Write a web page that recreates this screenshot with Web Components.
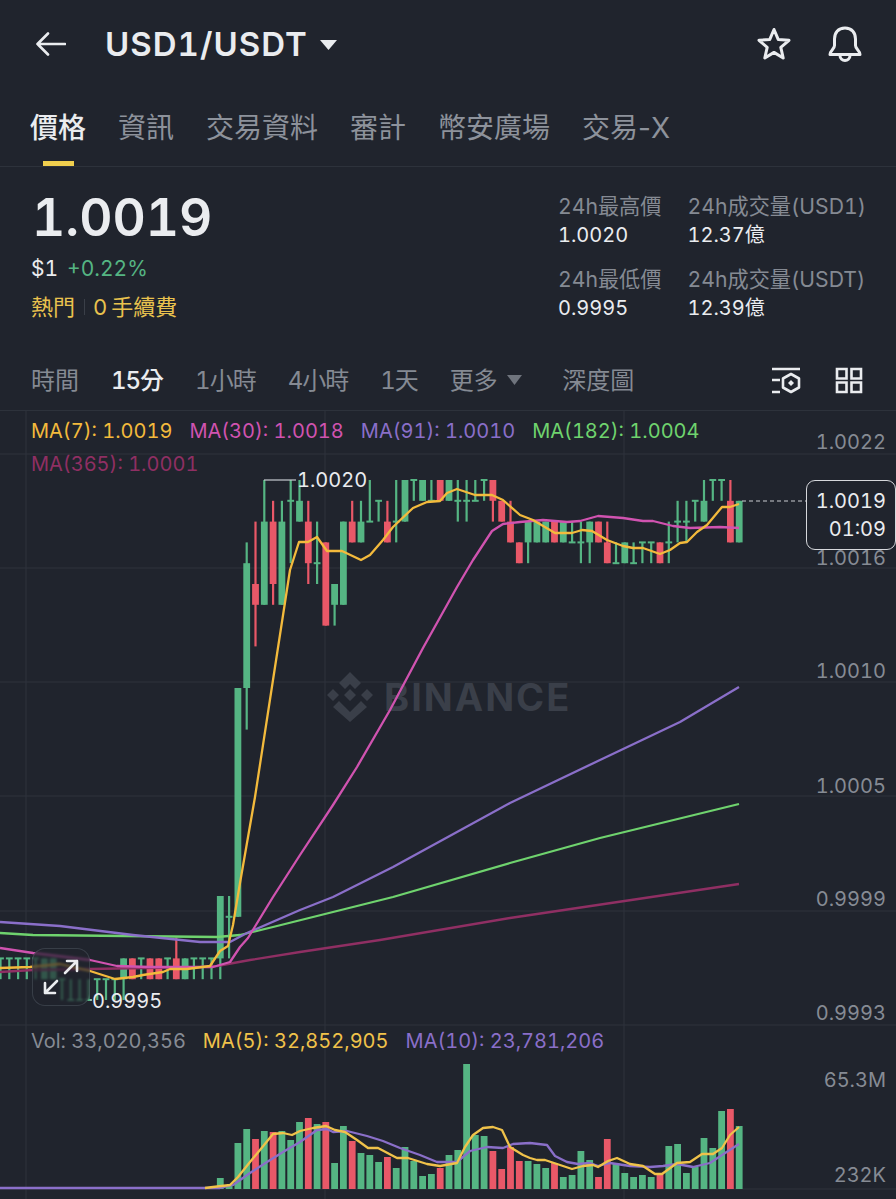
<!DOCTYPE html>
<html lang="zh-Hant">
<head>
<meta charset="utf-8">
<title>USD1/USDT</title>
<style>
    html, body { margin: 0; background: #20242d; }
    body {
        width: 896px;
        height: 1199px;
        overflow: hidden;
        display: flex;
        flex-direction: column;
        color: #eaecef;
        font-family: Inter, "Noto Sans CJK TC", sans-serif;
        font-variant-numeric: tabular-nums;
    }
</style>
</head>
<body>
<pair-header>USD1/USDT</pair-header>
<tab-bar></tab-bar>
<price-panel></price-panel>
<interval-bar></interval-bar>
<kline-chart></kline-chart>

<script>
class PairHeader extends HTMLElement {
    constructor() {
        super();
        this.attachShadow({ mode: 'open' });
    }

    connectedCallback() {
        this.shadowRoot.innerHTML = `
            <style>
                :host { display: flex; align-items: center; height: 88px; padding: 0 34px 0 36px; box-sizing: border-box; }
                .back { width: 30px; height: 24px; margin-right: 39px; }
                .name { font-size: 33px; font-weight: 600; letter-spacing: 1px; color: #eaecef; }
                .caret { width: 17px; height: 10px; margin-left: 12px; margin-top: 1px; }
                .spacer { flex: 1; }
                .star { width: 34px; height: 34px; margin-right: 37px; }
                .bell { width: 34px; height: 36px; }
                svg { display: block; fill: none; stroke: #eaecef; }
            </style>
            <svg class="back" viewBox="0 0 30 24" stroke-width="2.6" stroke-linecap="round" stroke-linejoin="round">
                <path d="M1.5 12H29M12 1.5 1.5 12 12 22.5"/>
            </svg>
            <span class="name"><slot></slot></span>
            <svg class="caret" viewBox="0 0 17 10" style="fill:#eaecef;stroke:none"><path d="M0 0H17L8.5 10Z"/></svg>
            <span class="spacer"></span>
            <svg class="star" viewBox="0 0 34 34" stroke-width="3" stroke-linejoin="round">
                <path d="M17 2.5 21.2 12.4 32 13.3 23.8 20.3 26.2 31 17 25.4 7.8 31 10.2 20.3 2 13.3 12.8 12.4Z"/>
            </svg>
            <svg class="bell" viewBox="0 0 34 36" stroke-width="3" stroke-linejoin="round" stroke-linecap="round">
                <path d="M17 2C10 2 6.5 7 6.5 13V19.5C6.5 23 2 24.5 2 28.5H32C32 24.5 27.5 23 27.5 19.5V13C27.5 7 24 2 17 2Z"/>
                <path d="M12 29.5C12 36 22 36 22 29.5"/>
            </svg>
        `;
    }
}

class TabBar extends HTMLElement {
    constructor() {
        super();
        this.attachShadow({ mode: 'open' });
    }

    connectedCallback() {
        const tabs = ['價格', '資訊', '交易資料', '審計', '幣安廣場', '交易-X'];
        this.shadowRoot.innerHTML = `
            <style>
                :host { display: flex; gap: 32px; height: 79px; padding-left: 30px; box-sizing: border-box; border-bottom: 1px solid #2d323b; font-size: 28px; color: #8d929b; font-variant-numeric: normal; }
                .tab { position: relative; line-height: 80px; white-space: nowrap; }
                .on { color: #eaecef; font-weight: 500; }
                .on::after { content: ''; position: absolute; left: 13px; width: 31px; bottom: 0; height: 5px; background: #f0cf4e; }
            </style>
            ${tabs.map((t, i) => `<div class="tab ${i === 0 ? 'on' : ''}">${t}</div>`).join('')}
        `;
    }
}

class StatCell extends HTMLElement {
    constructor() {
        super();
        this.attachShadow({ mode: 'open' });
    }

    connectedCallback() {
        this.shadowRoot.innerHTML = `
            <style>
                :host { display: block; white-space: nowrap; }
                .label { font-size: 21.2px; line-height: 30px; color: #858a93; }
                .value { font-size: 20px; line-height: 28px; color: #eaecef; }
            </style>
            <div class="label">${this.getAttribute('label')}</div>
            <div class="value">${this.getAttribute('value')}</div>
        `;
    }
}

class PricePanel extends HTMLElement {
    constructor() {
        super();
        this.attachShadow({ mode: 'open' });
    }

    connectedCallback() {
        this.shadowRoot.innerHTML = `
            <style>
                :host { display: flex; justify-content: space-between; height: 188px; padding: 0 30px 0 31px; box-sizing: border-box; }
                .left { padding-top: 18px; }
                .price { font-size: 51.5px; line-height: 64px; font-weight: 600; color: #eaecef; margin-left: 1px; }
                .sub { font-size: 21px; line-height: 30px; margin-top: 5px; display: flex; gap: 9px; }
                .up { color: #55b583; }
                .tags { display: flex; align-items: center; font-size: 22px; line-height: 30px; margin-top: 8px; color: #e9c24e; }
                .sep { width: 1px; height: 16px; background: #3a3f48; margin: 0 8px 0 9px; }
                .num { margin-right: 4px; }
                .stats { display: grid; grid-template-columns: auto auto; column-gap: 26px; row-gap: 15px; align-content: start; padding-top: 24px; }
            </style>
            <div class="left">
                <div class="price">1.0019</div>
                <div class="sub"><span>$1</span><span class="up">+0.22%</span></div>
                <div class="tags"><span>熱門</span><span class="sep"></span><span class="num">0</span><span>手續費</span></div>
            </div>
            <div class="stats">
                <stat-cell label="24h最高價" value="1.0020"></stat-cell>
                <stat-cell label="24h成交量(USD1)" value="12.37億"></stat-cell>
                <stat-cell label="24h最低價" value="0.9995"></stat-cell>
                <stat-cell label="24h成交量(USDT)" value="12.39億"></stat-cell>
            </div>
        `;
    }
}

class IntervalBar extends HTMLElement {
    constructor() {
        super();
        this.attachShadow({ mode: 'open' });
    }

    connectedCallback() {
        const items = ['時間', '15分', '1小時', '4小時', '1天'];
        this.shadowRoot.innerHTML = `
            <style>
                :host { display: flex; align-items: center; gap: 32px; height: 55px; padding: 0 33px 8px 31px; box-sizing: border-box; font-size: 24px; color: #858a93; }
                .on { color: #eaecef; font-weight: 500; }
                .num { letter-spacing: -1px; }
                .more { display: flex; align-items: center; gap: 9px; margin-right: 8.5px; }
                .more svg { width: 15px; height: 10px; fill: #6f747d; margin-top: 2px; }
                .spacer { flex: 1; }
                .icons { display: flex; gap: 34px; margin-top: 4px; }
                .icons svg { display: block; fill: none; stroke: #eaecef; stroke-width: 2.6; }
            </style>
            ${items.map(t => `<span class="${t === '15分' ? 'on ' : ''}${/\d/.test(t) ? 'num' : ''}">${t}</span>`).join('')}
            <span class="more">更多<svg viewBox="0 0 15 10"><path d="M0 0H15L7.5 10Z"/></svg></span>
            <span>深度圖</span>
            <span class="spacer"></span>
            <span class="icons">
                <svg width="30" height="28" viewBox="0 0 30 28">
                    <path d="M1 2H29M1 13H9M1 25H9"/>
                    <path d="M20 7 28 11.5V20.5L20 25 12 20.5V11.5Z" stroke-linejoin="round"/>
                    <path d="M20 13 23 16 20 19 17 16Z" style="fill:#eaecef;stroke:none"/>
                </svg>
                <svg width="28" height="27" viewBox="0 0 28 27">
                    <path d="M2 2H11.5V11.5H2ZM16.5 2H26V11.5H16.5ZM2 15.5H11.5V25H2ZM16.5 15.5H26V25H16.5Z"/>
                </svg>
            </span>
        `;
    }
}

// candle levels: n steps of 0.0001 down from 1.0020
const lvl = n => 480 + 20.8 * n;
const cx = i => 246.7 + 8.794 * i;

// [index, up?, bodyTop, bodyBottom, wickTop, wickBottom]
// bodyTop === bodyBottom gives the flat "T" dash
const CANDLES = [
    [-28, 1, 23, 23, 23, 24], [-27, 1, 23, 23, 23, 24], [-26, 1, 23, 23, 23, 24], [-25, 1, 23, 23, 23, 24],
    [-24, 1, 23, 23, 23, 24], [-23, 1, 23, 24, 23, 24], [-22, 1, 23, 24, 23, 24], [-21, 1, 24, 24, 24, 25],
    [-20, 1, 25, 25, 24, 25], [-19, 1, 25, 25, 24, 25], [-18, 1, 25, 25, 24, 25], [-17, 1, 24, 24, 24, 25],
    [-16, 1, 24, 24, 24, 25], [-15, 1, 24, 24, 24, 25], [-14, 1, 23, 24, 23, 25], [-13, 0, 23, 24, 23, 24],
    [-12, 1, 23, 23, 23, 24], [-11, 0, 23, 24, 23, 24], [-10, 0, 23, 24, 23, 24], [-9, 1, 23, 23, 23, 24],
    [-8, 0, 23, 24, 22, 24], [-7, 1, 23, 24, 23, 24], [-6, 1, 23, 23, 23, 24], [-5, 1, 23, 23, 23, 24],
    [-4, 1, 23, 23, 23, 24], [-3, 1, 20, 23, 20, 24], [-2, 1, 21, 21, 20, 23], [-1, 1, 10, 21, 10, 21],
    [0, 1, 4, 10, 3, 12], [1, 0, 5, 6, 2, 8], [2, 1, 2, 6, 0, 6], [3, 0, 2, 5, 1, 6],
    [4, 1, 2, 6, 1, 6], [5, 1, 1, 1, 0, 4], [6, 1, 1, 2, 0, 2], [7, 0, 2, 4, 1, 5],
    [8, 1, 4, 4, 2, 5], [9, 0, 3, 7, 3, 7], [10, 1, 5, 6, 5, 7], [11, 1, 2, 6, 2, 6],
    [12, 0, 2, 3, 1, 3], [13, 1, 2, 3, 1, 3], [14, 1, 2, 2, 0, 2], [15, 1, 1, 1, 1, 2],
    [16, 0, 2, 3, 1, 3], [17, 1, 2, 2, 0, 3], [18, 1, 0, 2, 0, 2], [19, 1, 0, 0, 0, 1],
    [20, 1, 0, 1, 0, 1], [21, 1, 1, 1, 0, 1], [22, 0, 0, 1, 0, 1], [23, 1, 0, 1, 0, 1],
    [24, 1, 1, 1, 0, 2], [25, 1, 1, 1, 0, 2], [26, 1, 1, 1, 0, 1], [27, 1, 0, 0, 0, 1],
    [28, 0, 0, 1, 0, 2], [29, 0, 1, 2, 1, 2], [30, 0, 2, 3, 1, 3], [31, 0, 3, 4, 3, 4],
    [32, 1, 2, 3, 2, 4], [33, 1, 2, 3, 2, 3], [34, 1, 2, 3, 2, 3], [35, 0, 2, 3, 2, 3],
    [36, 1, 2, 3, 2, 3], [37, 1, 3, 3, 2, 3], [38, 1, 3, 3, 2, 4], [39, 1, 2, 3, 2, 4],
    [40, 0, 2, 3, 2, 3], [41, 0, 3, 4, 2, 4], [42, 1, 4, 4, 3, 4], [43, 1, 3, 4, 3, 4],
    [44, 1, 4, 4, 3, 4], [45, 1, 3, 3, 3, 4], [46, 1, 3, 3, 3, 4], [47, 0, 3, 4, 3, 4],
    [48, 1, 3, 3, 2, 4], [49, 1, 2, 2, 1, 3], [50, 1, 2, 2, 1, 3], [51, 1, 1, 1, 1, 2],
    [52, 1, 1, 2, 0, 2], [53, 1, 0, 0, 0, 1], [54, 1, 0, 0, 0, 1], [55, 0, 1, 3, 0, 3],
    [56, 1, 1, 3, 1, 3]
];

const MA_LINES = [
    { color: '#8f2f63', pts: '0,972 33,970 90,969 200,967 217,966 250,960 300,952 380,940 510,918 739,884' },
    { color: '#6fd36e', pts: '0,933 33,935 217,937 240,935 273,927 333,912 393,897 510,863 600,838 739,804' },
    { color: '#8a6fc9', pts: '0,922 60,926 133,935 200,942 230,942 247,933 300,910 333,897 393,867 457,832 510,803 600,760 680,722 739,687' },
    { color: '#d053b0', pts: '0,948 33,953 90,960 117,966 150,967 213,967 230,962 240,947 248,938 273,897 300,855 333,805 357,767 390,710 423,648 457,587 473,560 492,531 503,524 520,522 543,520 567,522 580,521 598,516 623,518 643,521 653,521 673,526 690,528 720,527 739,528' },
    { color: '#f3ba3c', pts: '0,968 30,967 60,964 90,971 115,979 133,977 143,975 163,972 170,969 187,969 210,966 220,951 228,946 233,925 240,883 255,797 273,680 290,570 299,542 308,542 317,537 327,551 342,551 361,560 370,555 383,540 393,527 413,508 427,502 440,501 447,493 457,489 475,495 492,495 503,500 520,515 533,520 555,533 572,533 582,530 592,531 607,540 623,546 633,548 643,548 660,554 670,550 680,543 687,542 697,532 707,525 722,507 730,507 739,504' }
];

// [index, up?, top y as read off the volume pane]
const VOLUME = [
    [-3, 1, 1178], [-2, 1, 1185], [-1, 1, 1143], [0, 1, 1129], [1, 0, 1139], [2, 1, 1131], [3, 0, 1132], [4, 1, 1131],
    [5, 1, 1140], [6, 1, 1122], [7, 0, 1118], [8, 1, 1124], [9, 0, 1122], [10, 1, 1163], [11, 1, 1126], [12, 0, 1141],
    [13, 1, 1153], [14, 1, 1155], [15, 1, 1162], [16, 0, 1157], [17, 1, 1168], [18, 1, 1147], [19, 1, 1161], [20, 1, 1176],
    [21, 1, 1174], [22, 0, 1168], [23, 1, 1155], [24, 1, 1150], [25, 1, 1064], [26, 1, 1135], [27, 1, 1136], [28, 0, 1151],
    [29, 0, 1169], [30, 0, 1147], [31, 0, 1161], [32, 1, 1161], [33, 1, 1164], [34, 1, 1168], [35, 0, 1163], [36, 1, 1177],
    [37, 1, 1175], [38, 1, 1151], [39, 1, 1160], [40, 0, 1177], [41, 0, 1139], [42, 1, 1163], [43, 1, 1173], [44, 1, 1177],
    [45, 1, 1175], [46, 1, 1177], [47, 0, 1173], [48, 1, 1146], [49, 1, 1144], [50, 1, 1173], [51, 1, 1167], [52, 1, 1138],
    [53, 1, 1148], [54, 1, 1111], [55, 0, 1109], [56, 1, 1126]
];

const VOL_LINES = [
    { color: '#8a6fc9', pts: '0,1188 220,1188 233,1185 250,1173 267,1162 283,1152 300,1142 317,1130 327,1129 333,1132 347,1131 367,1136 383,1141 400,1148 420,1155 437,1162 457,1162 470,1151 487,1147 503,1148 513,1144 530,1143 547,1145 555,1156 567,1162 578,1164 590,1163 598,1166 610,1163 630,1166 650,1167 663,1166 677,1164 693,1167 710,1163 722,1155 739,1144' },
    { color: '#f0c24a', pts: '205,1188 213,1187 230,1185 238,1177 250,1162 260,1150 273,1134 283,1133 292,1135 300,1131 313,1128 326,1126 335,1130 345,1132 357,1140 368,1148 378,1148 397,1158 408,1158 427,1164 440,1166 457,1163 465,1147 473,1135 483,1128 493,1127 502,1130 510,1147 523,1155 530,1158 537,1160 545,1160 557,1164 572,1169 583,1166 593,1165 598,1167 608,1161 617,1158 630,1164 643,1166 655,1174 662,1174 677,1163 690,1162 702,1154 713,1154 722,1148 730,1135 739,1127' }
];

class KlineChart extends HTMLElement {
    constructor() {
        super();
        this.attachShadow({ mode: 'open' });
    }

    connectedCallback() {
        const green = '#55b583';
        const red = '#e95868';
        const grid = [454, 568, 682, 796, 911, 1025, 1189];

        const gridLines = grid.map(y => `<path d="M0 ${y}H896"/>`).join('')
            + [26, 325, 624].map(x => `<path d="M${x} 410V1199"/>`).join('');

        const candles = CANDLES.map(([i, up, bt, bb, wt, wb]) => {
            const x = cx(i).toFixed(1);
            const c = up ? green : red;
            let s = `<rect x="${(x - 1.1).toFixed(1)}" y="${lvl(wt)}" width="2.2" height="${(lvl(wb) - lvl(wt)).toFixed(1)}" fill="${c}"/>`;
            if (bb > bt) {
                s += `<rect x="${(x - 3.4).toFixed(1)}" y="${lvl(bt)}" width="6.8" height="${(lvl(bb) - lvl(bt)).toFixed(1)}" fill="${c}"/>`;
            } else {
                s += `<rect x="${(x - 3.4).toFixed(1)}" y="${lvl(bt) - 1}" width="6.8" height="2" fill="${c}"/>`;
            }
            return s;
        }).join('');

        const bars = VOLUME.map(([i, up, top]) =>
            `<rect x="${(cx(i) - 3.4).toFixed(1)}" y="${top}" width="6.8" height="${1189 - top}" fill="${up ? green : red}"/>`
        ).join('');

        const polys = (lines, w) => lines.map(l =>
            `<polyline points="${l.pts}" fill="none" stroke="${l.color}" stroke-width="${w}" stroke-linejoin="round"/>`
        ).join('');

        const axis = [
            ['1.0022', 442], ['1.0016', 558], ['1.0010', 671], ['1.0005', 786],
            ['0.9999', 899], ['0.9993', 1013], ['65.3M', 1080], ['232K', 1175]
        ].map(([t, y]) => `<text x="886" y="${y}" dy="0.36em" text-anchor="end" class="axis">${t}</text>`).join('');

        this.shadowRoot.innerHTML = `
            <style>
                :host { display: block; position: relative; flex: 1; overflow: hidden; border-top: 1px solid #2d323b; box-sizing: border-box; font-size: 20px; }
                svg.chart { position: absolute; left: 0; top: -1px; width: 896px; height: 789px; display: block; }
                text { font-family: Inter, sans-serif; font-size: 20px; font-variant-numeric: tabular-nums; }
                .axis { fill: #868b94; }
                .mark { fill: #eaecef; }
                .grid path { stroke: #2e333c; stroke-width: 1; fill: none; }
                .legend { position: absolute; left: 31px; top: 8px; display: flex; gap: 17px; white-space: nowrap; line-height: 24px; }
                .legend2 { position: absolute; left: 31px; top: 41px; line-height: 24px; color: #8f2f63; white-space: nowrap; }
                .vol { position: absolute; left: 31px; top: 618px; display: flex; gap: 17px; white-space: nowrap; line-height: 24px; color: #868b94; }
                .tag { position: absolute; left: 806px; top: 69px; width: 90px; height: 70px; box-sizing: border-box; border: 1.5px solid #d6d8dc; border-radius: 9px; background: #20242d; color: #eaecef; text-align: right; padding: 6px 0 0 0; line-height: 28px; }
                .tag div { padding-right: 9px; }
                .zoom { position: absolute; left: 32px; top: 537px; width: 58px; height: 58px; box-sizing: border-box; border-radius: 13px; border: 1.5px solid rgba(132,142,156,.25); background: rgba(32,36,45,.65); backdrop-filter: blur(1px); display: flex; align-items: center; justify-content: center; }
                .zoom svg { width: 38px; height: 38px; fill: none; stroke: #eaecef; stroke-width: 2.6; }
            </style>
            <svg class="chart" viewBox="0 410 896 789">
                <g class="grid">${gridLines}</g>
                <g transform="translate(327 672)" fill="#3a3f49">
                    <path d="M23 0 34 11 28 17 23 12 18 17 12 11ZM6 17 12 23 6 29 0 23ZM40 17 46 23 40 29 34 23ZM23 17 29 23 23 29 17 23ZM12 29 18 35 23 40 28 35 34 29 40 35 23 50 6 35Z"/>
                </g>
                <text x="384" y="711" style="font-size:38px;font-weight:700;fill:#3a3f49;letter-spacing:2px">BINANCE</text>
                ${candles}
                ${polys(MA_LINES, 2.3)}
                ${bars}
                ${polys(VOL_LINES, 2.3)}
                <path d="M264 480H296" stroke="#c9ccd1" stroke-width="1.2" fill="none"/>
                <text x="297" y="480" dy="0.36em" class="mark">1.0020</text>
                <path d="M90 1000H92" stroke="#c9ccd1" stroke-width="1.2" fill="none"/>
                <text x="92" y="1001" dy="0.36em" class="mark">0.9995</text>
                <path d="M742 501H806" stroke="#c9ccd1" stroke-width="1.2" stroke-dasharray="4 3" fill="none"/>
                ${axis}
            </svg>
            <div class="legend">
                <span style="color:#f3ba3c">MA(7): 1.0019</span>
                <span style="color:#d053b0">MA(30): 1.0018</span>
                <span style="color:#8a6fc9">MA(91): 1.0010</span>
                <span style="color:#6fd36e">MA(182): 1.0004</span>
            </div>
            <div class="legend2">MA(365): 1.0001</div>
            <div class="vol">
                <span>Vol: 33,020,356</span>
                <span style="color:#f0c24a">MA(5): 32,852,905</span>
                <span style="color:#8a6fc9">MA(10): 23,781,206</span>
            </div>
            <div class="tag"><div>1.0019</div><div>01:09</div></div>
            <div class="zoom">
                <svg viewBox="0 0 38 38" stroke-linecap="round" stroke-linejoin="round">
                    <path d="M23 15 35 3M25 3H35V13M15 23 3 35M3 25V35H13"/>
                </svg>
            </div>
        `;
    }
}

customElements.define('pair-header', PairHeader);
customElements.define('tab-bar', TabBar);
customElements.define('stat-cell', StatCell);
customElements.define('price-panel', PricePanel);
customElements.define('interval-bar', IntervalBar);
customElements.define('kline-chart', KlineChart);
</script>
</body>
</html>
